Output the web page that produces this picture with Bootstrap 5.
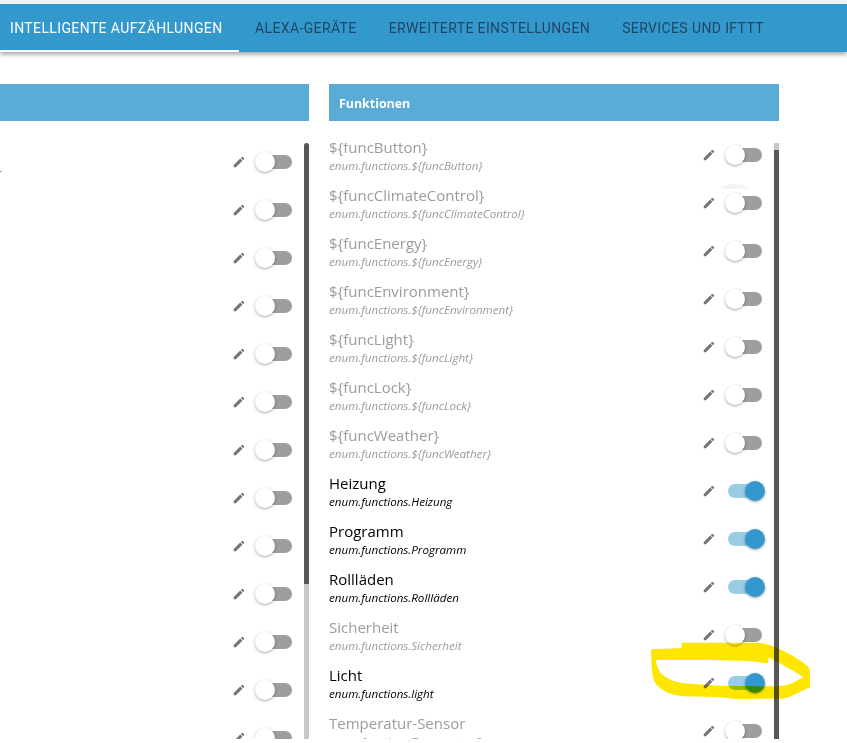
<!DOCTYPE html>
<html lang="de">
  <head>
    <meta charset="UTF-8" />
    <meta name="viewport" content="width=device-width, initial-scale=1.0" />
    <title>Intelligente Aufzählungen</title>
    <link
      href="https://cdn.jsdelivr.net/npm/bootstrap@5.3.0/dist/css/bootstrap.min.css"
      rel="stylesheet"
    />
    <style>
      html, body { height: 743px; overflow: hidden; }
      body {
        position: relative;
        width: 847px;
        background-color: #fff;
        padding-top: 4px;
        font-family: "Open Sans", sans-serif;
      }
      .top-strip { position: absolute; top: 0; left: 0; right: 0; height: 4px; background: #f2f2f2; }
      .tab-bar {
        height: 48px;
        background-color: #3399cc;
        box-shadow: 0 2px 5px rgba(0, 0, 0, 0.4);
      }
      .tab-item {
        height: 48px;
        padding: 0 16px;
        font-family: Roboto, sans-serif;
        font-weight: 400;
        font-size: 14px;
        letter-spacing: 0.38px;
        line-height: 48px;
        color: #1f4664;
        text-decoration: none;
        white-space: nowrap;
      }
      .tab-item.selected { color: #fff; width: 239px; padding-left: 10px; border-bottom: 2px solid #fff; }
      .columns { padding-top: 32px; }
      .col-left { width: 309px; margin-right: 20px; }
      .col-right { width: 450px; }
      .col-head {
        height: 37px;
        background-color: #5aabd5;
        color: #fff;
        font-weight: 700;
        font-size: 12.4px;
        line-height: 39px;
        padding-left: 10px;
      }
      .list-area { height: 596px; margin-top: 22px; overflow: hidden; }
      .list-rows { flex: 1 1 auto; min-width: 0; }
      .col-right .list-rows { margin-top: -7px; }
      .entry { height: 48px; padding-right: 12px; }
      .entry-title { font-size: 15px; line-height: 20px; color: #000; padding-top: 1px; }
      .entry-id { font-size: 11.6px; line-height: 14px; margin-top: 2px; font-style: italic; color: #000; }
      .entry.off .entry-title, .entry.off .entry-id { color: #9c9c9c; }
      .pen { flex: none; width: 14px; height: 14px; margin: 12px 12px 0 0; }
      .switch-track {
        position: relative;
        display: block;
        flex: none;
        width: 34px;
        height: 14px;
        margin-top: 12px;
        border-radius: 7px;
        background: #9e9e9e;
      }
      .switch-track::after {
        content: "";
        position: absolute;
        left: -3px;
        top: -3px;
        width: 20px;
        height: 20px;
        border-radius: 50%;
        background: #fff;
        box-shadow: 0 1px 3px rgba(0, 0, 0, 0.35);
      }
      .entry.on .switch-track { background: #99cce5; }
      .entry.on .switch-track::after { left: auto; right: -3px; background: #3399cc; }
      .entry.ripple .switch-track::before {
        content: "";
        position: absolute;
        left: -6px;
        top: -12px;
        width: 26px;
        height: 5px;
        border-radius: 13px 13px 0 0 / 5px 5px 0 0;
        background: #f3f3f3;
      }
      .scroll-rail { width: 5px; flex: none; display: flex; flex-direction: column; }
      .rail-light { background: #c8c8c8; }
      .rail-dark { background: #575757; }
      .rail-left .rail-dark { flex: 0 0 441px; border-radius: 3px 3px 0 0; }
      .rail-left .rail-light { flex: 1 1 auto; }
      .rail-right .rail-light { flex: 0 0 7px; }
      .rail-right .rail-dark { flex: 1 1 auto; }
      .cut-mark { position: absolute; left: 0; top: 171px; width: 2px; height: 1px; background: #9c9c9c; }
      .marker { position: absolute; left: 640px; top: 600px; mix-blend-mode: multiply; pointer-events: none; }
    </style>
  </head>
  <body>
    <div class="top-strip"></div>
    <nav class="tab-bar d-flex">
      <a href="#" class="tab-item selected">INTELLIGENTE AUFZÄHLUNGEN</a>
      <a href="#" class="tab-item">ALEXA-GERÄTE</a>
      <a href="#" class="tab-item">ERWEITERTE EINSTELLUNGEN</a>
      <a href="#" class="tab-item">SERVICES UND IFTTT</a>
    </nav>

    <div class="columns d-flex">
      <section class="col-left">
        <div class="col-head">&nbsp;</div>
        <div class="list-area d-flex">
          <div class="list-rows" id="leftRows"></div>
          <div class="scroll-rail rail-left"><div class="rail-dark"></div><div class="rail-light"></div></div>
        </div>
      </section>
      <section class="col-right">
        <div class="col-head">Funktionen</div>
        <div class="list-area d-flex">
          <div class="list-rows" id="rightRows"></div>
          <div class="scroll-rail rail-right"><div class="rail-light"></div><div class="rail-dark"></div></div>
        </div>
      </section>
    </div>

    <div class="cut-mark"></div>

    <!-- hand drawn highlighter round the Licht switch -->
    <svg class="marker" width="207" height="143" viewBox="0 0 621 429">
      <path
        fill="#ffe600"
        fill-rule="evenodd"
        d="M33 148 L125 144 L125 128 L360 128 Q390 134 420 148 Q470 172 495 192 Q510 202 510 215 L510 262 L460 285 Q445 295 425 296 L290 297 L230 291 L130 289 Q75 284 50 255 Q36 238 35 200 Z
           M48 180 Q50 205 65 222 Q90 245 130 250 L240 257 L400 259 Q440 259 455 250 L490 232 Q450 205 385 172 L385 190 L320 183 L200 180 Z"
      />
    </svg>

    <script src="https://cdn.jsdelivr.net/npm/bootstrap@5.3.0/dist/js/bootstrap.bundle.min.js"></script>
    <script>
      const pen =
        '<svg class="pen" viewBox="0 0 24 24"><path fill="#757575" d="M3 17.25V21h3.75L17.81 9.94l-3.75-3.75L3 17.25zM20.71 7.04a1 1 0 0 0 0-1.41l-2.34-2.34a1 1 0 0 0-1.41 0l-1.83 1.83 3.75 3.75 1.83-1.83z"/></svg>';

      function rowHtml(title, id, state) {
        return `<div class="entry ${state} d-flex">
          <div class="flex-grow-1 text-nowrap overflow-hidden">
            <div class="entry-title">${title}</div>
            <div class="entry-id">${id}</div>
          </div>
          ${pen}<span class="switch-track"></span>
        </div>`;
      }

      const functions = [
        ["${funcButton}", "off"],
        ["${funcClimateControl}", "off ripple"],
        ["${funcEnergy}", "off"],
        ["${funcEnvironment}", "off"],
        ["${funcLight}", "off"],
        ["${funcLock}", "off"],
        ["${funcWeather}", "off"],
        ["Heizung", "on"],
        ["Programm", "on"],
        ["Rollläden", "on"],
        ["Sicherheit", "off"],
        ["Licht", "on", "light"],
        ["Temperatur-Sensor", "off"],
      ];

      document.getElementById("rightRows").innerHTML = functions
        .map(([title, state, key]) => rowHtml(title, `enum.functions.${key || title}`, state))
        .join("");

      document.getElementById("leftRows").innerHTML = Array(13)
        .fill(rowHtml("&nbsp;", "&nbsp;", "off"))
        .join("");
    </script>
  </body>
</html>
